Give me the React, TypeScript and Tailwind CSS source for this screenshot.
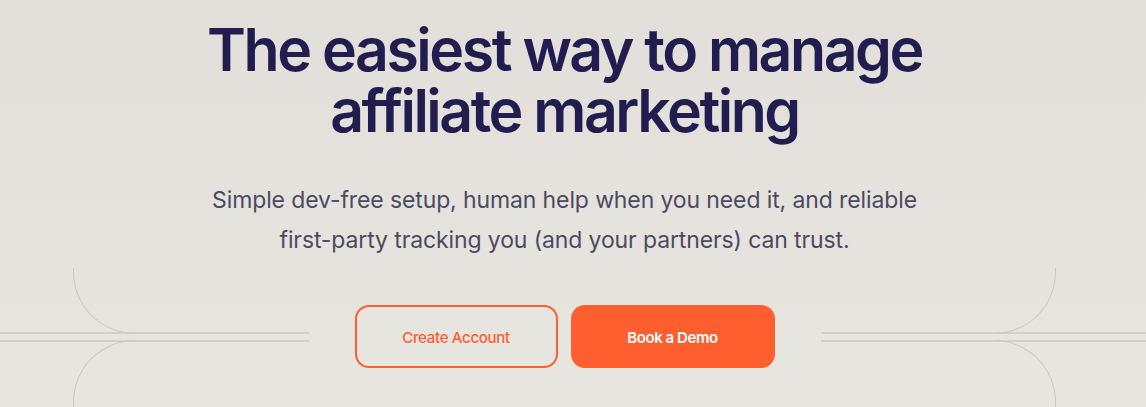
export default function App() {
  return (
    <div className="h-[407px] w-full overflow-hidden bg-gradient-to-b from-[#e2dfdb] to-[#e8e6e1] pr-[17px] font-['Inter','Liberation_Sans',sans-serif]">
      <div className="flex flex-col items-center pt-[19px]">
        <h1 className="text-center text-[59px] leading-[61px] font-semibold tracking-[-0.042em] text-[#211d4e]">
          The easiest way to manage
          <br />
          affiliate marketing
        </h1>
        <p className="mt-[39px] text-center text-[23px] leading-[40px] tracking-[-0.005em] text-[#4c4a5f]">
          Simple dev-free setup, human help when you need it, and reliable
          <br />
          first-party tracking you (and your partners) can trust.
        </p>
      </div>

      <div className="mt-[45px] flex items-center gap-[46px]">
        <div className="relative flex flex-1 flex-col gap-[6px]">
          <div className="absolute bottom-[calc(50%+3px)] left-[73px] h-[66px] w-[62px] rounded-bl-[62px] border-b border-l border-[#cdc8c1]" />
          <div className="absolute top-[calc(50%+3px)] left-[73px] h-[80px] w-[62px] rounded-tl-[62px] border-t border-l border-[#cdc8c1]" />
          <div className="h-[2px] bg-[#d4cfc8]" />
          <div className="h-[2px] bg-[#d4cfc8]" />
        </div>

        <div className="flex gap-[13px]">
          <button className="flex h-[63px] w-[203px] items-center justify-center rounded-[14px] border-2 border-[#ff5f2e] pt-[3px] text-[15px] font-medium tracking-[-0.02em] text-[#ff5f2e]">
            Create Account
          </button>
          <button className="flex h-[63px] w-[204px] items-center justify-center rounded-[14px] bg-[#ff5f2e] pt-[3px] text-[15px] font-semibold tracking-[-0.03em] text-white">
            Book a Demo
          </button>
        </div>

        <div className="relative flex flex-1 flex-col gap-[6px]">
          <div className="absolute right-[73px] bottom-[calc(50%+3px)] h-[66px] w-[62px] rounded-br-[62px] border-r border-b border-[#cdc8c1]" />
          <div className="absolute top-[calc(50%+3px)] right-[73px] h-[80px] w-[62px] rounded-tr-[62px] border-t border-r border-[#cdc8c1]" />
          <div className="-mr-[17px] h-[2px] bg-[#d4cfc8]" />
          <div className="-mr-[17px] h-[2px] bg-[#d4cfc8]" />
        </div>
      </div>
    </div>
  );
}
